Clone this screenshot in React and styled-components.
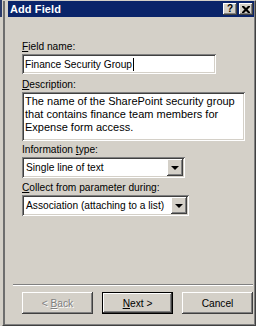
import React from 'react';
import styled, { createGlobalStyle } from 'styled-components';

const GlobalStyle = createGlobalStyle`
  html, body {
    margin: 0;
    padding: 0;
    background: #ffffff;
  }
  body {
    font-family: "Liberation Sans", Arial, sans-serif;
    font-size: 10.2px;
    color: #000;
  }
`;

const raised = `
  box-shadow:
    inset -1px -1px #404040,
    inset 1px 1px #ffffff,
    inset -2px -2px #808080,
    inset 2px 2px #d4d0c8;
`;

const sunken = `
  box-shadow:
    inset 1px 1px #808080,
    inset -1px -1px #ffffff,
    inset 2px 2px #404040,
    inset -2px -2px #d4d0c8;
`;

const App = () => {
  return (
    <>
      <GlobalStyle />
      <Screen>
        <Sliver />
        <Window>
          <TitleBar>
            <Title>Add Field</Title>
            <TitleButtons>
              <CaptionButton>?</CaptionButton>
              <CaptionButton>
                <svg width="8" height="7" viewBox="0 0 8 7">
                  <path d="M0 0h2l2 2 2-2h2v1L5.5 3.5 8 6v1H6L4 5 2 7H0V6l2.5-2.5L0 1z" fill="#000" />
                </svg>
              </CaptionButton>
            </TitleButtons>
          </TitleBar>

          <Body>
            <Field>
              <Label><u>F</u>ield name:</Label>
              <TextBox $width={194}>
                Finance Security Group<Caret />
              </TextBox>
            </Field>

            <Field $top={4}>
              <Label><u>D</u>escription:</Label>
              <TextArea>
                The name of the SharePoint security group that contains finance team members for
                Expense form access.
              </TextArea>
            </Field>

            <Field $top={2}>
              <Label>Information <u>t</u>ype:</Label>
              <Combo $width={163}>
                <ComboText>Single line of text</ComboText>
                <DropButton><Arrow /></DropButton>
              </Combo>
            </Field>

            <Field $top={3}>
              <Label><u>C</u>ollect from parameter during:</Label>
              <Combo $width={167}>
                <ComboText>Association (attaching to a list)</ComboText>
                <DropButton><Arrow /></DropButton>
              </Combo>
            </Field>

            <Spacer />
            <Separator />

            <ButtonRow>
              <PushButton $disabled><span>&lt;&nbsp;<u>B</u>ack</span></PushButton>
              <PushButton $default><span><u>N</u>ext&nbsp;&gt;</span></PushButton>
              <PushButton><span>Cancel</span></PushButton>
            </ButtonRow>
          </Body>
        </Window>
      </Screen>
    </>
  );
};

const Screen = styled.div`
  display: flex;
  width: 261px;
  height: 332px;
  background: #ffffff;
  overflow: hidden;
`;

const Sliver = styled.div`
  width: 2px;
  height: 326px;
  background: linear-gradient(#2a3a6a 0 17px, #d4d0c8 17px);
`;

const Window = styled.div`
  display: flex;
  flex-direction: column;
  box-sizing: border-box;
  width: 254px;
  height: 326px;
  padding: 0 1px 1px 5px;
  background: #d4d0c8;
  border: 1px solid;
  border-color: #d4d0c8 #404040 #404040 #d4d0c8;
  box-shadow: inset 2px 0 #6e6e6e, inset -1px -1px #808080;
`;

const TitleBar = styled.div`
  display: flex;
  align-items: center;
  justify-content: space-between;
  height: 16px;
  padding: 0 1px 0 2px;
  background: #0a246a;
`;

const Title = styled.span`
  color: #ffffff;
  font-weight: bold;
  font-size: 11px;
  letter-spacing: 0.1px;
`;

const TitleButtons = styled.div`
  display: flex;
  gap: 2px;
`;

const CaptionButton = styled.div`
  display: flex;
  align-items: center;
  justify-content: center;
  width: 14px;
  height: 12px;
  background: #d4d0c8;
  font-weight: bold;
  font-size: 10px;
  line-height: 12px;
  ${raised}
`;

const Body = styled.div`
  display: flex;
  flex: 1;
  flex-direction: column;
  padding: 23px 1px 10px 0;
`;

const Field = styled.div`
  display: flex;
  flex-direction: column;
  margin-top: ${(p) => p.$top || 0}px;
  padding-left: 14px;
`;

const Label = styled.div`
  height: 14px;
  line-height: 13px;
  u {
    text-decoration-thickness: 1px;
  }
`;

const TextBox = styled.div`
  display: flex;
  align-items: center;
  box-sizing: border-box;
  width: ${(p) => p.$width}px;
  height: 20px;
  padding: 0 3px;
  background: #ffffff;
  ${sunken}
`;

const Caret = styled.span`
  display: inline-block;
  width: 1px;
  height: 13px;
  margin-left: 1px;
  background: #000;
`;

const TextArea = styled.div`
  box-sizing: border-box;
  width: 223px;
  height: 49px;
  padding: 3px 4px 0 3px;
  background: #ffffff;
  font-size: 11px;
  line-height: 13px;
  ${sunken}
`;

const Combo = styled.div`
  display: flex;
  align-items: center;
  box-sizing: border-box;
  width: ${(p) => p.$width}px;
  height: 21px;
  padding: 2px;
  background: #ffffff;
  ${sunken}
`;

const ComboText = styled.span`
  flex: 1;
  padding-left: 2px;
  white-space: nowrap;
  overflow: hidden;
`;

const DropButton = styled.div`
  display: flex;
  flex-shrink: 0;
  align-items: center;
  justify-content: center;
  width: 16px;
  height: 17px;
  background: #d4d0c8;
  ${raised}
`;

const Arrow = styled.span`
  width: 0;
  height: 0;
  border-left: 4px solid transparent;
  border-right: 4px solid transparent;
  border-top: 4px solid #000;
  margin-top: 1px;
`;

const Spacer = styled.div`
  flex: 1;
`;

const Separator = styled.div`
  height: 0;
  margin-left: 5px;
  border-top: 1px solid #808080;
  border-bottom: 1px solid #ffffff;
`;

const ButtonRow = styled.div`
  display: flex;
  justify-content: flex-end;
  gap: 9px;
  margin-top: 6px;
`;

const PushButton = styled.div`
  display: flex;
  align-items: center;
  justify-content: center;
  box-sizing: border-box;
  width: 71px;
  height: 22px;
  background: #d4d0c8;
  color: ${(p) => (p.$disabled ? '#808080' : '#000')};
  text-shadow: ${(p) => (p.$disabled ? '1px 1px #ffffff' : 'none')};
  ${(p) =>
    p.$default
      ? `
    border: 1px solid #000;
    box-shadow:
      inset -1px -1px #404040,
      inset 1px 1px #ffffff,
      inset -2px -2px #808080;
  `
      : raised}
`;

export default App;
